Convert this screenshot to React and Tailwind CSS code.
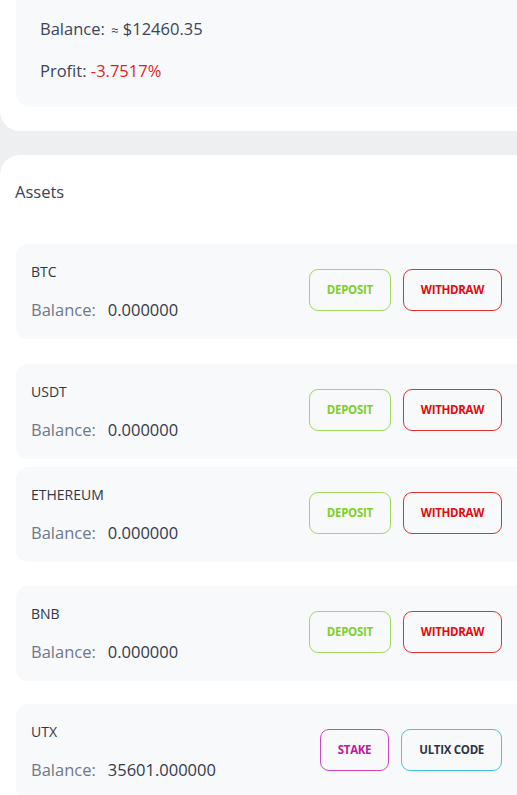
import React from 'react';

const assets = [
  { name: 'BTC', balance: '0.000000', mt: 'mt-10' },
  { name: 'USDT', balance: '0.000000', mt: 'mt-[25px]' },
  { name: 'ETHEREUM', balance: '0.000000', mt: 'mt-[8px]' },
  { name: 'BNB', balance: '0.000000', mt: 'mt-[24px]' },
  { name: 'UTX', balance: '35601.000000', mt: 'mt-[23px]', utx: true },
];

const OutlineButton = ({ children, className }) => (
  <button className={`h-[42px] px-[17px] rounded-[9px] border text-[11.5px] font-bold tracking-[-0.3px] bg-transparent ${className}`}>
    {children}
  </button>
);

const AssetRow = ({ asset }) => (
  <div className={`${asset.mt} ml-4 h-[95px] rounded-l-[12px] bg-[#f8f9fb] pl-[15px] pr-[15px] flex items-center justify-between`}>
    <div className="flex flex-col">
      <span className="text-[14px] leading-[18px] font-medium text-[#2f3747]">{asset.name}</span>
      <div className="mt-[18px] text-[16.5px] leading-[22px] font-medium">
        <span className="text-[#6e7889]">Balance:</span>
        <span className="ml-[12px] text-[#323b4b]">{asset.balance}</span>
      </div>
    </div>
    <div className="flex gap-3 mb-1">
      {asset.utx ? (
        <>
          <OutlineButton className="border-[#d046c0] text-[#c2189f]">STAKE</OutlineButton>
          <OutlineButton className="border-[#42c6e2] text-[#2d3443]">ULTIX CODE</OutlineButton>
        </>
      ) : (
        <>
          <OutlineButton className="border-[#9fd85c] text-[#7fcf2a]">DEPOSIT</OutlineButton>
          <OutlineButton className="border-[#e23030] text-[#e30b0b]">WITHDRAW</OutlineButton>
        </>
      )}
    </div>
  </div>
);

const App = () => {
  return (
    <div className="min-h-screen bg-[#edeff1] text-[#3b4559] font-medium" style={{ fontFamily: '"Open Sans", "Noto Sans", sans-serif' }}>
      {/* summary card */}
      <div className="bg-white rounded-bl-[20px] pb-6">
        <div className="ml-4 h-[107px] bg-[#f8f9fb] rounded-bl-[14px] pl-6 pt-[17px]">
          <p className="text-[16.5px] leading-6">
            Balance: <span className="ml-0.5 text-[13px]">≈</span> $12460.35
          </p>
          <p className="mt-[17px] text-[16.5px] leading-6">
            Profit: <span className="text-[#e51c1c]">-3.7517%</span>
          </p>
        </div>
      </div>

      {/* assets card */}
      <div className="mt-6 bg-white rounded-tl-[20px] pt-[25px] pb-10">
        <h2 className="pl-[15px] text-[16.5px] leading-6 text-[#3a4356]">Assets</h2>
        {assets.map((a) => (
          <AssetRow key={a.name} asset={a} />
        ))}
      </div>
    </div>
  );
};

export default App;
